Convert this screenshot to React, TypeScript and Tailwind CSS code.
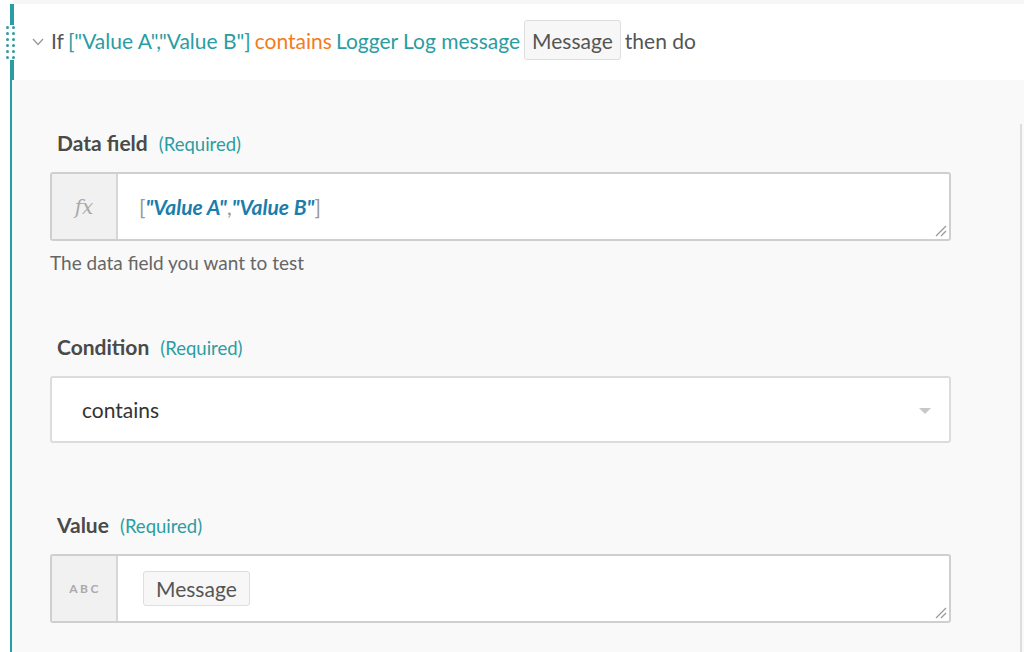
import React from "react";

function Resize() {
  return (
    <svg className="absolute bottom-[2px] right-[2px]" width="12" height="12" viewBox="0 0 12 12">
      <line x1="1" y1="11" x2="11" y2="1" stroke="#999" strokeWidth="1.3" />
      <line x1="6" y1="11" x2="11" y2="6" stroke="#999" strokeWidth="1.3" />
    </svg>
  );
}

function Label({ text }: { text: string }) {
  return (
    <div className="flex h-[24px] items-baseline pl-[7px] leading-[24px]">
      <span className="text-[21px] font-bold text-[#4a4a4a]">{text}</span>
      <span className="ml-[11px] text-[18.5px] text-[#2a9da3]">(Required)</span>
    </div>
  );
}

export default function App() {
  const dots = [0, 1, 2, 3, 4, 5];
  return (
    <div className="relative h-[652px] w-[1024px] overflow-hidden bg-white font-['Lato',sans-serif]">
      <div className="ml-[13px] h-[4px] bg-[#f6f6f6]" />
      <div className="ml-[10px] flex flex-col">
        {/* header */}
        <div className="flex h-[76px] items-center border-l-4 border-[#2a9da3] bg-white pb-[4px] pl-[18px] text-[21px] leading-none">
          <svg width="12" height="8" viewBox="0 0 12 8" className="mr-[7px] mt-[3px]">
            <polyline points="1,1 6,6.5 11,1" fill="none" stroke="#999" strokeWidth="1.3" />
          </svg>
          <span className="text-[#555]">If</span>
          <span className="ml-[4px] text-[#2a9da3]">["Value A","Value B"]</span>
          <span className="ml-[4px] text-[#f47b20]">contains</span>
          <span className="ml-[4px] text-[#2a9da3]">Logger Log message</span>
          <span className="ml-[4px] flex h-[40px] items-center rounded-[3px] border border-[#dedede] bg-[#f7f7f7] px-[7px] text-[#555]">
            Message
          </span>
          <span className="ml-[4px] text-[#555]">then do</span>
        </div>
        {/* body */}
        <div className="flex h-[572px] border-l-2 border-[#2a9da3] bg-[#f9f9f9]">
          <div className="flex w-[1008px] flex-col pl-[38px] pt-[51px]">
            <Label text="Data field" />
            <div className="relative mt-[17px] flex h-[69px] w-[901px] overflow-hidden rounded-[3px] border-2 border-[#cfcfcf] bg-white">
              <div className="flex w-[66px] items-center justify-center border-r-2 border-[#d6d6d6] bg-[#f1f1f1]">
                <span className="font-['DejaVu_Serif',serif] text-[20px] italic text-[#aaa]">fx</span>
              </div>
              <div className="flex items-center pl-[21px] text-[21px]">
                <span className="text-[#999]">[</span>
                <span className="font-bold italic text-[#1b7dab]">"Value A"</span>
                <span className="text-[#999]">,</span>
                <span className="font-bold italic text-[#1b7dab]">"Value B"</span>
                <span className="text-[#999]">]</span>
              </div>
              <Resize />
            </div>
            <div className="mt-[10px] text-[19px] leading-[24px] text-[#666]">The data field you want to test</div>

            <div className="mt-[60px]">
              <Label text="Condition" />
            </div>
            <div className="relative mt-[17px] flex h-[67px] w-[901px] items-center rounded-[3px] border-2 border-[#dcdcdc] bg-white pl-[30px] text-[21px] text-[#333]">
              contains
              <svg className="absolute right-[18px] top-[30px]" width="12" height="6" viewBox="0 0 12 6">
                <polygon points="0,0 12,0 6,6" fill="#c8c8c8" />
              </svg>
            </div>

            <div className="mt-[70px]">
              <Label text="Value" />
            </div>
            <div className="relative mt-[17px] flex h-[69px] w-[901px] overflow-hidden rounded-[3px] border-2 border-[#cfcfcf] bg-white">
              <div className="flex w-[66px] items-center justify-center border-r-2 border-[#d6d6d6] bg-[#f1f1f1]">
                <span className="pl-[2px] text-[12px] font-bold tracking-[2.5px] text-[#aaa]">ABC</span>
              </div>
              <div className="flex items-center pl-[25px]">
                <span className="flex h-[35px] items-center rounded-[3px] border border-[#dedede] bg-[#f7f7f7] px-[12px] text-[21px] text-[#555]">
                  Message
                </span>
              </div>
              <Resize />
            </div>
          </div>
          <div className="mt-[44px] w-[2px] bg-[#dddddd]" />
        </div>
      </div>
      {/* drag handle */}
      <div className="absolute left-[6px] top-[25px] grid grid-cols-2 gap-x-[3px] gap-y-[3px] bg-white py-[1px]">
        {dots.map((d) => (
          <React.Fragment key={d}>
            <div className="h-[3px] w-[3px] rounded-full bg-[#2a9da3]" />
            <div className="h-[3px] w-[3px] rounded-full bg-[#2a9da3]" />
          </React.Fragment>
        ))}
      </div>
    </div>
  );
}
